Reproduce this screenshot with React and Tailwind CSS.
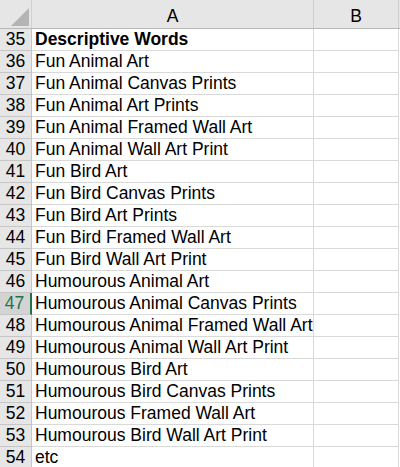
import React from 'react';

const rows = [
  [35, 'Descriptive Words', true],
  [36, 'Fun Animal Art'],
  [37, 'Fun Animal Canvas Prints'],
  [38, 'Fun Animal Art Prints'],
  [39, 'Fun Animal Framed Wall Art'],
  [40, 'Fun Animal Wall Art Print'],
  [41, 'Fun Bird Art'],
  [42, 'Fun Bird Canvas Prints'],
  [43, 'Fun Bird Art Prints'],
  [44, 'Fun Bird Framed Wall Art'],
  [45, 'Fun Bird Wall Art Print'],
  [46, 'Humourous Animal Art'],
  [47, 'Humourous Animal Canvas Prints'],
  [48, 'Humourous Animal Framed Wall Art'],
  [49, 'Humourous Animal Wall Art Print'],
  [50, 'Humourous Bird Art'],
  [51, 'Humourous Bird Canvas Prints'],
  [52, 'Humourous Framed Wall Art'],
  [53, 'Humourous Bird Wall Art Print'],
  [54, 'etc'],
];

export default function App() {
  return (
    <div className="w-[400px] h-[467px] overflow-hidden bg-white text-black font-['Liberation_Sans',Arial,sans-serif]">
      {/* column headers */}
      <div className="flex h-[29px] bg-[#e6e6e6] border-b border-[#b8b8b8]">
        <div className="w-[32px] shrink-0 border-r border-[#d0d0d0] flex items-end justify-end pr-[2px] pb-[2px]">
          <svg width="18" height="18" viewBox="0 0 18 18">
            <polygon points="18,0 18,18 0,18" fill="#b4b4b4" />
          </svg>
        </div>
        <div className="w-[282px] shrink-0 border-r border-[#d0d0d0] flex items-end justify-center pb-[3px] text-[17.5px] leading-none">A</div>
        <div className="w-[85px] shrink-0 border-r border-[#d0d0d0] flex items-end justify-center pb-[3px] text-[17.5px] leading-none">B</div>
      </div>
      {rows.map(([n, text, bold]) => {
        const sel = n === 47;
        return (
          <div key={n} className="flex h-[22px] text-[17.5px] leading-none">
            <div
              className={
                sel
                  ? 'w-[32px] shrink-0 bg-[#d3d3d3] border-b border-[#c6c6c6] border-r-2 border-r-[#217346] text-[#217346] flex items-center justify-center pr-[1px]'
                  : 'w-[32px] shrink-0 bg-[#e6e6e6] border-b border-r border-[#c6c6c6] flex items-center justify-center pt-[1px]'
              }
            >
              {n}
            </div>
            <div className={'w-[282px] shrink-0 border-b border-r border-[#d9d9d9] flex items-center pl-[3px] whitespace-nowrap overflow-visible' + (bold ? ' font-bold' : '')}>
              {text}
            </div>
            <div className="w-[85px] shrink-0 border-b border-r border-[#d9d9d9]" />
          </div>
        );
      })}
    </div>
  );
}
